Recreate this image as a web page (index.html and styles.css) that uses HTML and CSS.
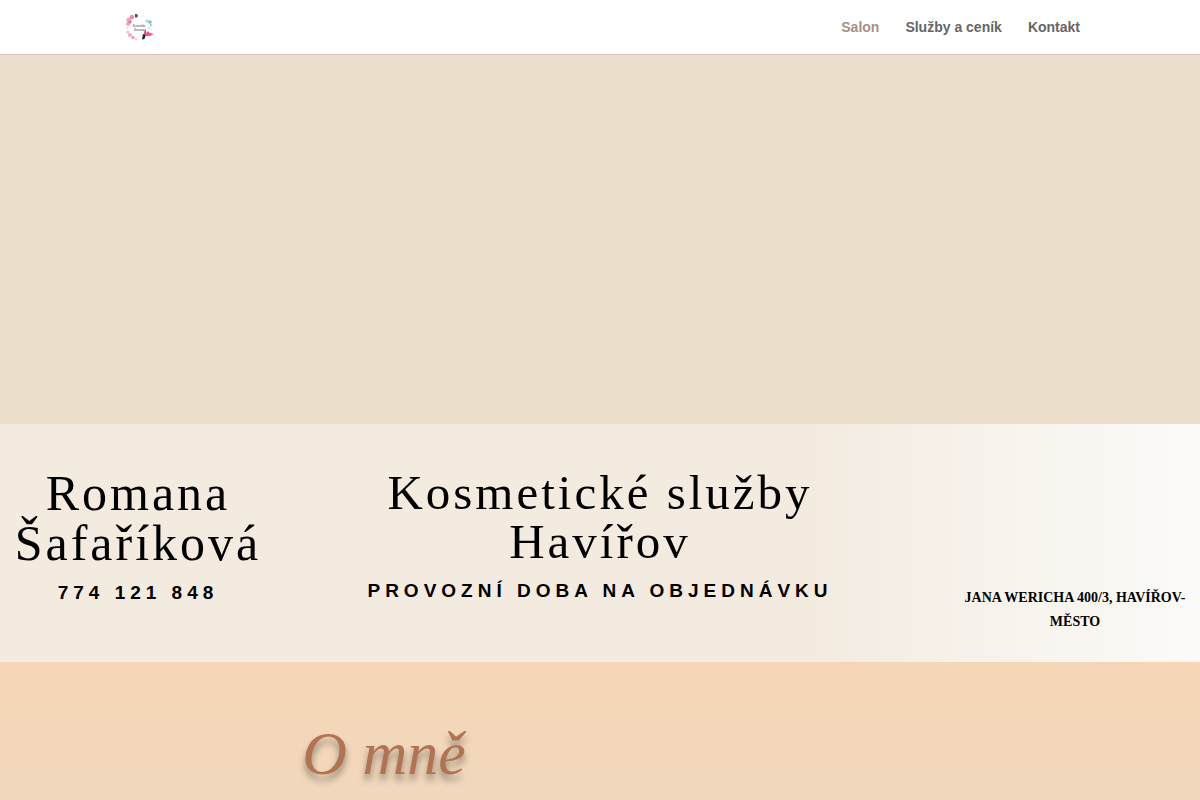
FILE: index.html
```
<!DOCTYPE html>
<html lang="cs">
<head>
    <meta charset="UTF-8">
    <meta name="viewport" content="width=device-width, initial-scale=1.0">
    <title>Kosmetické služby Havířov</title>
    <link rel="stylesheet" href="styles.css">
</head>
<body>
    <header>
        <div class="container">
            <a href="#salon" class="logo" aria-label="Romana Šafaříková">
                <svg viewBox="0 0 30 30" width="30" height="30">
                    <!-- flower wreath -->
                    <g fill="#f4a3bd">
                        <circle cx="5" cy="8" r="2.6"/>
                        <circle cx="4" cy="12" r="2"/>
                        <circle cx="8" cy="5" r="2.2" fill="#ee87a9"/>
                        <circle cx="6" cy="10" r="1.6" fill="#ea6f98"/>
                        <circle cx="3.5" cy="16" r="1" fill="#fad3df"/>
                        <circle cx="4" cy="20" r="1.6" fill="#f7bccf"/>
                        <circle cx="6" cy="23" r="2" fill="#f4a9c1"/>
                        <circle cx="9" cy="25.5" r="1.6" fill="#f08fb0"/>
                        <circle cx="12" cy="27" r="1" fill="#f7bccf"/>
                    </g>
                    <g fill="#a5d8d4">
                        <circle cx="23" cy="9" r="1.6"/>
                        <circle cx="26" cy="10" r="1.8" fill="#86bfba"/>
                        <circle cx="27" cy="13" r="1.4"/>
                        <circle cx="25" cy="16" r="1.2" fill="#c9e8e5"/>
                        <circle cx="27" cy="18" r="1" fill="#d5ebe9"/>
                        <circle cx="19" cy="4" r="1" fill="#eef2f1"/>
                    </g>
                    <path d="M11 2 L13 2 L14 4 L12 6 L11 5 Z" fill="#4d4a52"/>
                    <path d="M14 3 L15 4 L13 6 Z" fill="#8fc9c4"/>
                    <!-- lipstick -->
                    <path d="M22 21 L24 19 L26 21 L30 22 L26 24 L22 24 Z" fill="#f0578c"/>
                    <path d="M20.5 18 L22 17 L22 22 L20 22 Z" fill="#d9447a"/>
                    <path d="M19 22 L22 22.5 L20.5 27 L18 27.5 Z" fill="#26242a"/>
                    <text x="15" y="15" class="logo-text">Kosmetika</text>
                    <text x="15" y="19" class="logo-text">Romana</text>
                </svg>
            </a>
            <nav>
                <ul>
                    <li><a href="#salon" class="active">Salon</a></li>
                    <li><a href="#sluzby">Služby a ceník</a></li>
                    <li><a href="#kontakt">Kontakt</a></li>
                </ul>
            </nav>
        </div>
    </header>
    <main>
        <section id="salon" class="hero"></section>
        <section id="kontakt" class="info">
            <div class="info-name">
                <h2>Romana Šafaříková</h2>
                <p class="subtitle">774 121 848</p>
            </div>
            <div class="info-services">
                <h1>Kosmetické služby Havířov</h1>
                <p class="subtitle">Provozní doba na objednávku</p>
            </div>
            <address>Jana Wericha 400/3, Havířov-Město</address>
        </section>
        <section class="about">
            <div class="container">
                <h2>O mně</h2>
            </div>
        </section>
    </main>
</body>
</html>
```
FILE: styles.css
```
* {
    box-sizing: border-box;
}

body {
    margin: 0;
    font-family: "Liberation Sans", Arial, sans-serif;
    font-size: 14px;
    color: #000;
    background-color: #fff;
}

h1, h2, p {
    margin: 0;
}

.container {
    width: 80%;
    margin: 0 auto;
}

header {
    background-color: #fff;
    border-bottom: 1px solid #d3c8b9;
}

header .container {
    display: flex;
    justify-content: space-between;
    align-items: center;
    height: 54px;
}

.logo {
    display: flex;
    margin-left: 4px;
}

.logo-text {
    font-family: "Liberation Serif", serif;
    font-size: 3px;
    font-style: italic;
    text-anchor: middle;
    fill: #333;
}

nav ul {
    list-style: none;
    margin: 0;
    padding: 0;
    display: flex;
    gap: 26px;
}

nav a {
    color: #666;
    font-weight: bold;
    text-decoration: none;
}

nav a.active {
    color: #a89085;
}

.hero {
    height: 369px;
    background-color: #ebdecb;
}

.info {
    display: grid;
    grid-template-columns: 23% 54% 23%;
    padding: 44px 0 28px;
    text-align: center;
    background: linear-gradient(90deg, #f3ebe0 0%, #f3ebe0 68%, #fcfbf9 100%);
}

.info h1,
.info h2 {
    font-family: "Liberation Serif", "Times New Roman", serif;
    font-weight: normal;
    letter-spacing: 3px;
    line-height: 1;
    padding-bottom: 10px;
}

.info h1 {
    font-size: 49px;
    padding-left: 80px;
    padding-right: 80px;
}

.info h2 {
    font-size: 50px;
}

.subtitle {
    font-size: 19px;
    font-weight: bold;
    line-height: 29px;
    letter-spacing: 5px;
    text-transform: uppercase;
}

.info address {
    width: 250px;
    margin-left: auto;
    padding: 118px 12px 0;
    font-family: "Liberation Serif", "Times New Roman", serif;
    font-style: normal;
    font-weight: bold;
    line-height: 24px;
    text-transform: uppercase;
}

.about {
    padding: 60px 0 16px;
    background: linear-gradient(180deg, #f6d6b7 0%, #f1d8bc 100%);
}

.about h2 {
    width: 55%;
    font-family: "Liberation Serif", "Times New Roman", serif;
    font-size: 62px;
    font-style: italic;
    font-weight: normal;
    line-height: 1;
    text-align: center;
    color: #b07455;
    text-shadow: 0 6px 7px rgba(0, 0, 0, 0.4);
}
```
